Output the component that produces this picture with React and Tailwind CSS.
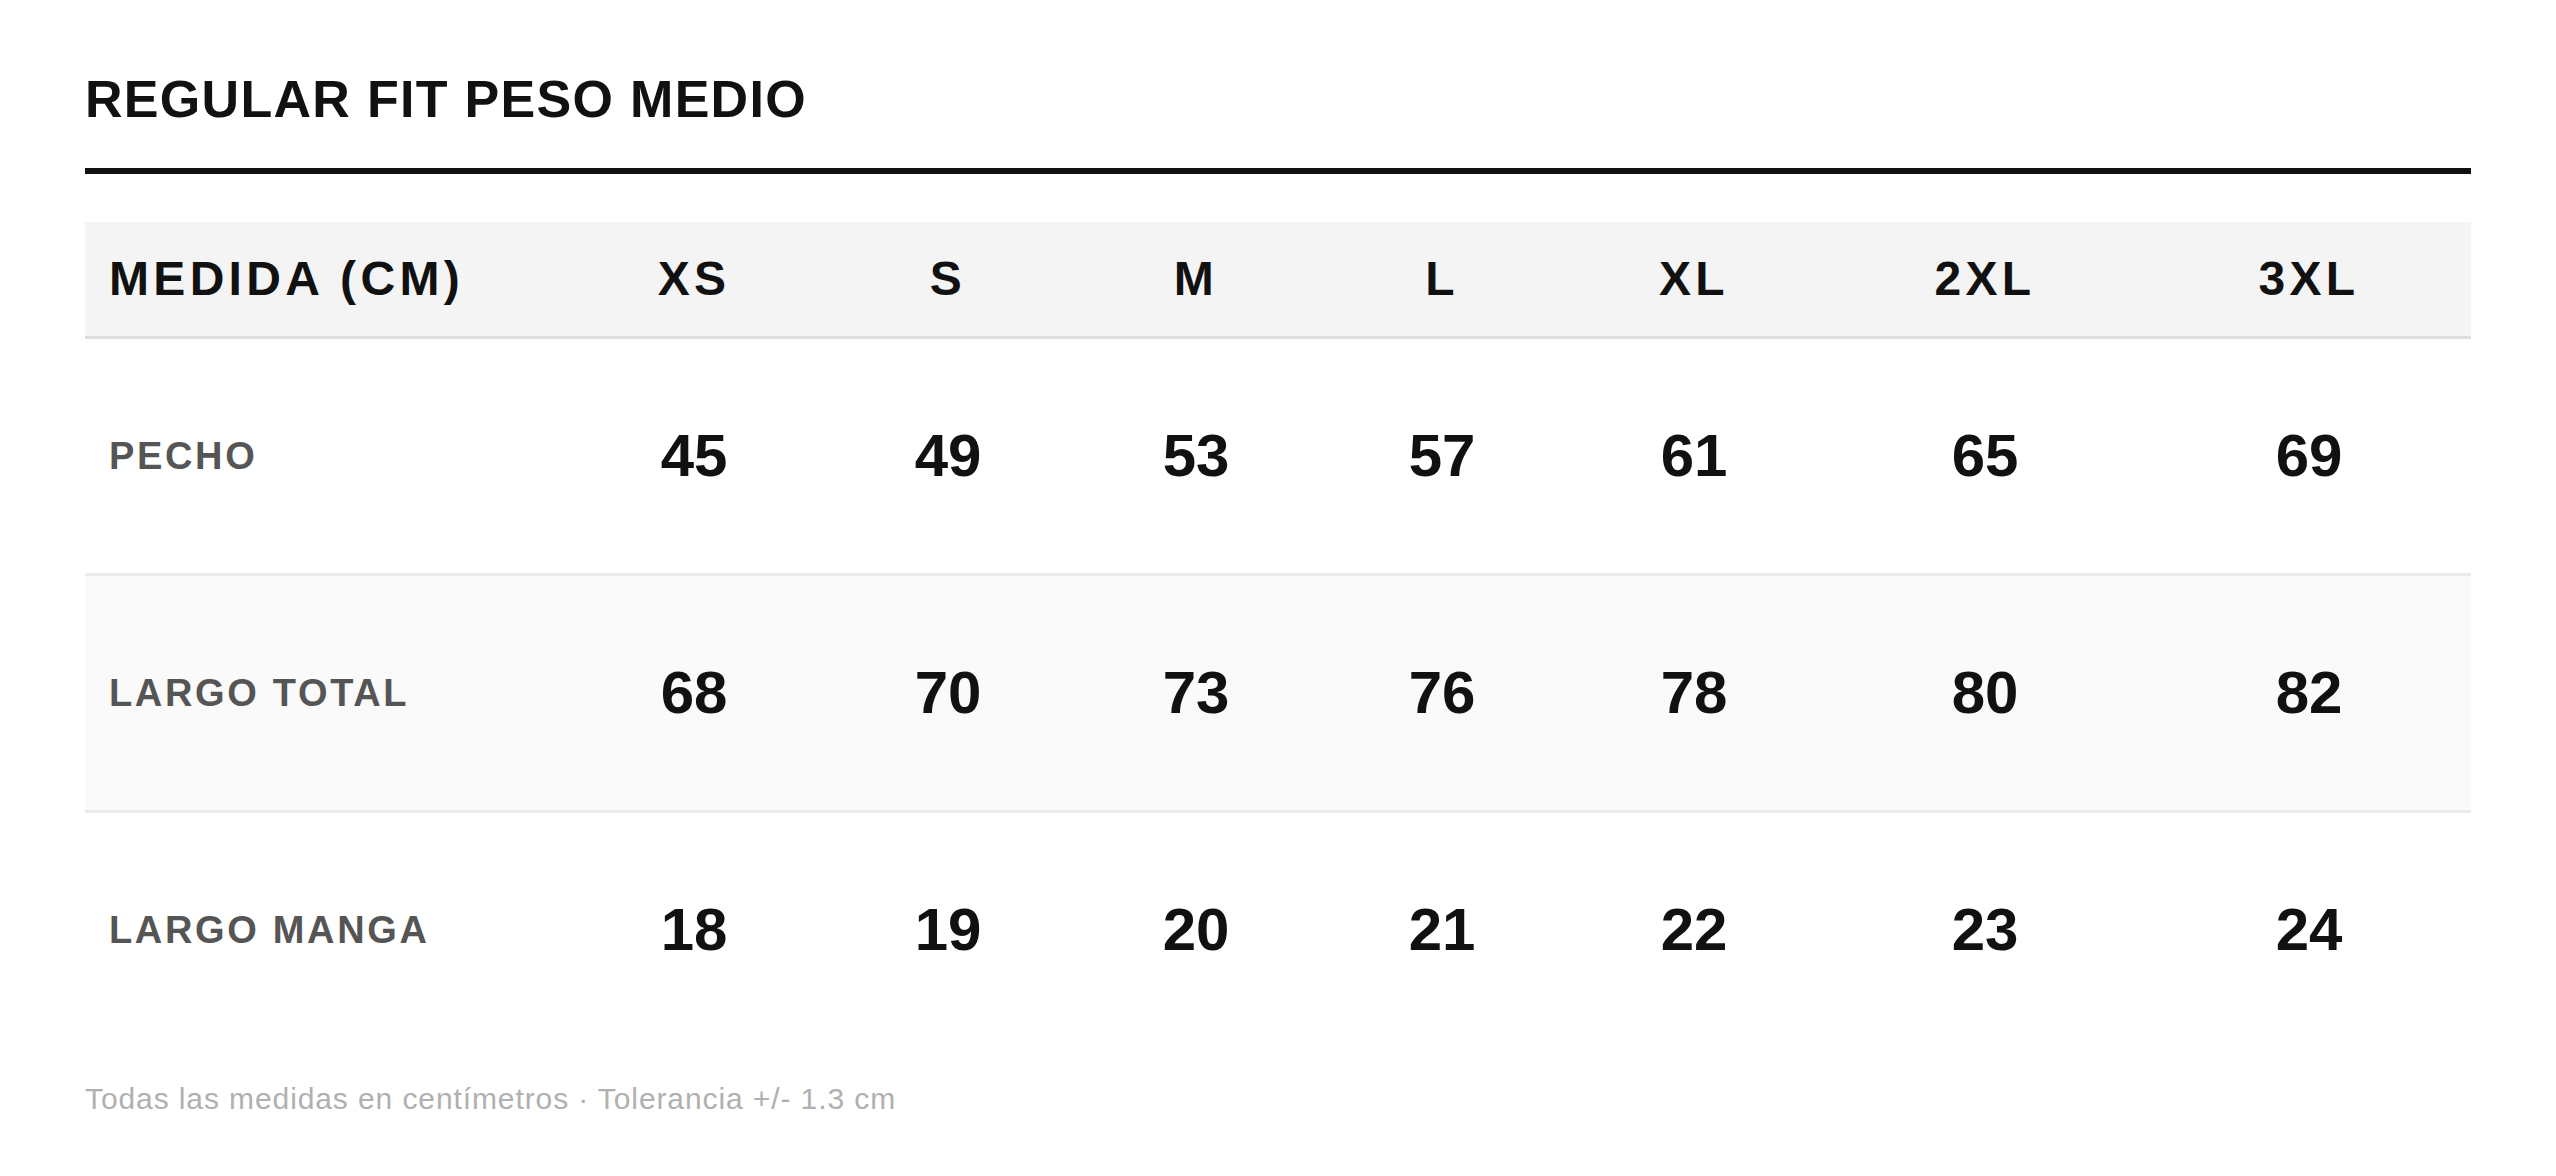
const SIZES = ["XS", "S", "M", "L", "XL", "2XL", "3XL"];

const ROWS = [
  { label: "PECHO", values: [45, 49, 53, 57, 61, 65, 69], bg: "bg-white", border: true },
  { label: "LARGO TOTAL", values: [68, 70, 73, 76, 78, 80, 82], bg: "bg-[#fafafa]", border: true },
  { label: "LARGO MANGA", values: [18, 19, 20, 21, 22, 23, 24], bg: "bg-white", border: false },
];

const COLS = "grid grid-cols-[480px_258px_250px_246px_246px_258px_324px_324px]";

export default function App() {
  return (
    <div
      className="min-h-screen bg-white px-[85px] pt-[69px]"
      style={{ fontFamily: '"Liberation Sans", Arial, sans-serif' }}
    >
      <h1 className="text-[52px] leading-[60px] font-bold tracking-[0.025em] text-[#111]">
        REGULAR FIT PESO MEDIO
      </h1>
      <div className="mt-[39px] h-[6px] bg-[#111]" />

      <div className="mt-[48px]">
        <div className={`${COLS} h-[117px] items-center bg-[#f4f4f4] border-b-[3px] border-[#dddddd]`}>
          <div className="pl-[24px] text-[48px] font-bold tracking-[0.09em] text-[#111]">
            MEDIDA (CM)
          </div>
          {SIZES.map((s) => (
            <div key={s} className="text-center text-[48px] font-bold tracking-[0.09em] text-[#111]">
              {s}
            </div>
          ))}
        </div>

        {ROWS.map((row) => (
          <div
            key={row.label}
            className={`${COLS} items-center ${row.bg} ${
              row.border ? "h-[237px] border-b-[3px] border-[#ebebeb]" : "h-[234px]"
            }`}
          >
            <div className="pl-[24px] text-[38px] font-bold tracking-[0.07em] text-[#555]">
              {row.label}
            </div>
            {row.values.map((v, i) => (
              <div key={i} className="text-center text-[60px] font-bold text-[#111]">
                {v}
              </div>
            ))}
          </div>
        ))}
      </div>

      <p className="mt-[34px] text-[30px] leading-[36px] tracking-[0.03em] text-[#b0b0b0]">
        Todas las medidas en centímetros · Tolerancia +/- 1.3 cm
      </p>
    </div>
  );
}
